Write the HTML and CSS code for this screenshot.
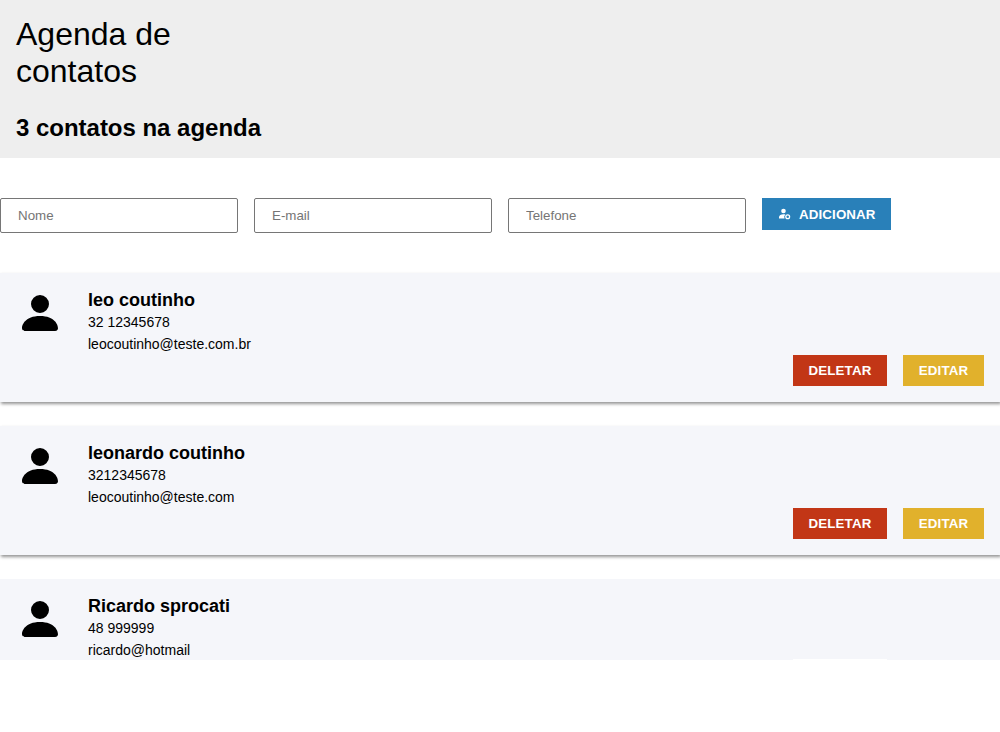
FILE: index.html
```html
<!DOCTYPE html>
<html lang="pt-BR">
<head>
<meta charset="utf-8">
<title>Agenda de contatos</title>
<link rel="stylesheet" href="styles.css">
</head>
<body>
<svg class="sprite" aria-hidden="true">
  <symbol id="person" viewBox="0 0 16 16"><path d="M3 14s-1 0-1-1 1-4 6-4 6 3 6 4-1 1-1 1H3zm5-6a3 3 0 1 0 0-6 3 3 0 0 0 0 6z"/></symbol>
</svg>
<header class="header">
  <h1 class="title">Agenda de<br>contatos</h1>
  <h2 class="count">3 contatos na agenda</h2>
</header>
<form class="form">
  <input class="field" type="text" placeholder="Nome">
  <input class="field" type="text" placeholder="E-mail">
  <input class="field" type="text" placeholder="Telefone">
  <button class="btn btn-add" type="button">
    <svg class="add-icon" viewBox="0 0 13 14"><circle cx="5.500" cy="4" r="2.300"/><path d="M1 11.500V10.300c0-2 2-3 4.500-3 .7 0 1.300.1 1.900.3A3.400 3.400 0 0 0 6.500 11.500z"/><circle class="ring" cx="9.700" cy="9.700" r="1.900"/></svg>
    <span>ADICIONAR</span>
  </button>
</form>
<ul class="list">
  <li class="card">
    <svg class="avatar"><use href="#person"/></svg>
    <div class="info"><h3 class="name">leo coutinho</h3><p class="line">32 12345678</p><p class="line">leocoutinho@teste.com.br</p></div>
    <div class="actions"><button class="btn btn-delete" type="button">DELETAR</button><button class="btn btn-edit" type="button">EDITAR</button></div>
  </li>
  <li class="card">
    <svg class="avatar"><use href="#person"/></svg>
    <div class="info"><h3 class="name">leonardo coutinho</h3><p class="line">3212345678</p><p class="line">leocoutinho@teste.com</p></div>
    <div class="actions"><button class="btn btn-delete" type="button">DELETAR</button><button class="btn btn-edit" type="button">EDITAR</button></div>
  </li>
  <li class="card card-last">
    <svg class="avatar"><use href="#person"/></svg>
    <div class="info"><h3 class="name">Ricardo sprocati</h3><p class="line">48 999999</p><p class="line">ricardo@hotmail</p></div>
    <span class="edge"></span>
  </li>
</ul>
</body>
</html>
```
FILE: styles.css
```css
* { margin: 0; padding: 0; box-sizing: border-box; }
body { font-family: "Liberation Sans", Arial, sans-serif; color: #000; background: #fff; }
.sprite { display: none; }
.header { display: flex; flex-direction: column; gap: 24px; height: 158px; padding: 16px; background: #eee; }
.title { font-size: 32px; line-height: 37px; font-weight: 400; }
.count { font-size: 24px; line-height: 28px; font-weight: 700; letter-spacing: -0.02px; }
.form { display: flex; align-items: flex-start; gap: 16px; margin: 40px 0; }
.field { width: 238px; height: 35px; padding: 0 17px; border: 1px solid #767676; border-radius: 2px; font: 13.333px "Liberation Sans", Arial, sans-serif; background: #fff; }
.field::placeholder { color: #757575; }
.btn { height: 31px; border: 0; color: #fff; font: bold 13.333px "Liberation Sans", Arial, sans-serif; letter-spacing: 0.12px; text-align: center; }
.btn-add { display: flex; align-items: center; gap: 8px; width: 129px; height: 32px; padding-left: 16px; background: #2980b9; }
.add-icon { width: 13px; height: 14px; fill: #fff; }
.ring { fill: none; stroke: #fff; stroke-width: 1.3; }
.btn-delete { width: 94px; background: #c23616; }
.btn-edit { width: 81px; background: #e1b12c; }
.list { display: flex; flex-direction: column; gap: 24px; list-style: none; }
.card { display: flex; height: 129px; padding: 16px; background: #f5f6fa; box-shadow: 1px 2px 3px rgba(0, 0, 0, 0.42); }
.card-last { height: 81px; box-shadow: none; }
.avatar { width: 48px; height: 48px; margin-right: 24px; }
.info { flex: 1; }
.name { font-size: 18px; line-height: 22px; font-weight: 700; }
.line { font-size: 14px; line-height: 22px; }
.actions { display: flex; align-self: flex-end; gap: 16px; }
.edge { width: 94px; height: 1px; margin: 64px 97px 0 0; background: #fff; }
```
